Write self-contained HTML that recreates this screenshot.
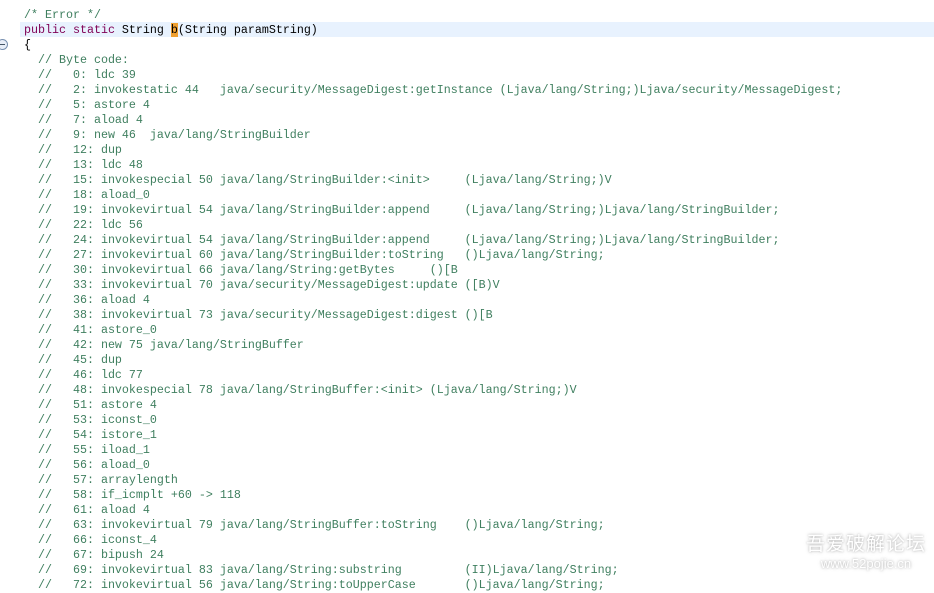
<!DOCTYPE html>
<html><head><meta charset="utf-8"><style>
html,body{margin:0;padding:0;width:934px;height:581px;overflow:hidden;background:#fff;}
#c{position:absolute;left:24px;top:8px;font-family:"Liberation Mono",monospace;font-size:11.67px;line-height:15px;white-space:pre;color:#000;}
.g{color:#3f7f5f}.k{color:#7f0055}.hl{position:absolute;left:20px;top:22px;width:914px;height:15px;background:#e8f2fe;}
.b{background:#f0a030;}
#m{position:absolute;left:-3px;top:39px;width:9px;height:9px;border-radius:50%;border:1px solid #7890b0;background:#e8eef8;}
#m:after{content:"";position:absolute;left:2px;top:4px;width:5px;height:1px;background:#456;}
#w{position:absolute;right:8px;top:534px;color:#fff;text-align:center;font-family:"Liberation Sans","Noto Sans CJK SC",sans-serif;text-shadow:0 0 2px #bbb,0 0 4px #ccc;}
</style></head><body>
<div class="hl"></div><div id="m"></div>
<div id="c"><span class="g">/* Error */</span>
<span class="k">public static</span> String <span class="b">b</span>(String paramString)
{
<span class="g">  // Byte code:
  //   0: ldc 39
  //   2: invokestatic 44   java/security/MessageDigest:getInstance (Ljava/lang/String;)Ljava/security/MessageDigest;
  //   5: astore 4
  //   7: aload 4
  //   9: new 46  java/lang/StringBuilder
  //   12: dup
  //   13: ldc 48
  //   15: invokespecial 50 java/lang/StringBuilder:&lt;init&gt;     (Ljava/lang/String;)V
  //   18: aload_0
  //   19: invokevirtual 54 java/lang/StringBuilder:append     (Ljava/lang/String;)Ljava/lang/StringBuilder;
  //   22: ldc 56
  //   24: invokevirtual 54 java/lang/StringBuilder:append     (Ljava/lang/String;)Ljava/lang/StringBuilder;
  //   27: invokevirtual 60 java/lang/StringBuilder:toString   ()Ljava/lang/String;
  //   30: invokevirtual 66 java/lang/String:getBytes     ()[B
  //   33: invokevirtual 70 java/security/MessageDigest:update ([B)V
  //   36: aload 4
  //   38: invokevirtual 73 java/security/MessageDigest:digest ()[B
  //   41: astore_0
  //   42: new 75 java/lang/StringBuffer
  //   45: dup
  //   46: ldc 77
  //   48: invokespecial 78 java/lang/StringBuffer:&lt;init&gt; (Ljava/lang/String;)V
  //   51: astore 4
  //   53: iconst_0
  //   54: istore_1
  //   55: iload_1
  //   56: aload_0
  //   57: arraylength
  //   58: if_icmplt +60 -&gt; 118
  //   61: aload 4
  //   63: invokevirtual 79 java/lang/StringBuffer:toString    ()Ljava/lang/String;
  //   66: iconst_4
  //   67: bipush 24
  //   69: invokevirtual 83 java/lang/String:substring         (II)Ljava/lang/String;
  //   72: invokevirtual 56 java/lang/String:toUpperCase       ()Ljava/lang/String;</span></div>
<div id="w"><div style="font-size:19px;letter-spacing:1px;line-height:22px">吾爱破解论坛</div><div style="font-size:13px;line-height:15px">www.52pojie.cn</div></div>
</body></html>
